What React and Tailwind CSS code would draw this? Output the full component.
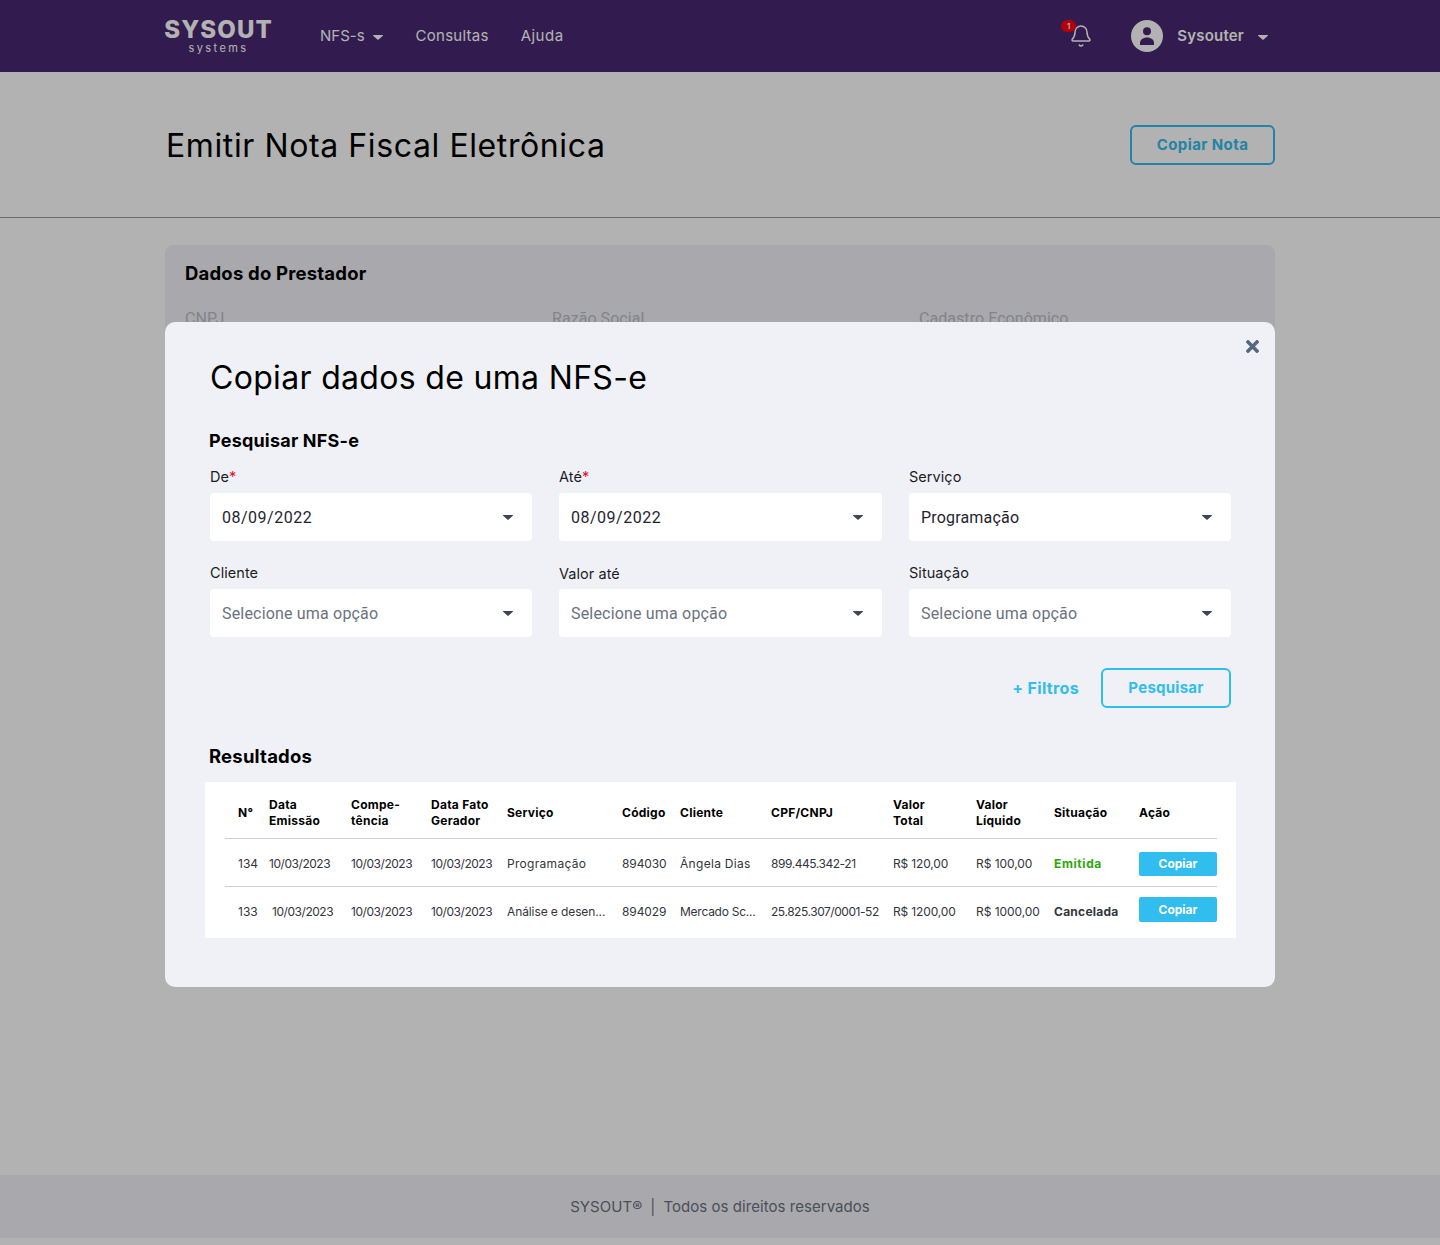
import { Bell } from "lucide-react"
import { FaTimes } from "react-icons/fa"

const Caret = ({ className = "" }) => (
  <svg width="10" height="5" viewBox="0 0 10 5" className={className}>
    <path d="M0.5 0h9a.5.5 0 0 1 .35.85L5.35 4.7a.5.5 0 0 1-.7 0L.15.85A.5.5 0 0 1 .5 0z" fill="currentColor" />
  </svg>
)

const Avatar = () => (
  <svg width="32" height="32" viewBox="0 0 32 32">
    <circle cx="16" cy="16" r="16" fill="#fff" />
    <circle cx="16" cy="11.2" r="4" fill="#482871" />
    <path d="M9 25v-2c0-3.4 3-5.6 7-5.6s7 2.2 7 5.6v2z" fill="#482871" />
  </svg>
)

function Field({ label, required, value, placeholder, lower, dateValue }) {
  return (
    <div>
      <div className={`h-[24px] flex items-center text-[14.5px] font-normal tracking-[0.05px] text-[#1c1c24] ${lower ? "pt-[2px]" : ""}`}>
        {label}
        {required && <span className="text-[#e0112b]">*</span>}
      </div>
      <div className="h-[48px] mt-[4px] px-3 flex items-center justify-between bg-white rounded-[4px]">
        <span className={`mt-[1px] [font-family:Roboto,sans-serif] text-[16px] ${dateValue ? "tracking-[0.5px]" : "tracking-[0.18px]"} ${placeholder ? "text-[#6b7280]" : "text-[#1f2430]"}`}>{value}</span>
        <Caret className="mr-[7px] text-[#3f4558]" />
      </div>
    </div>
  )
}

const heads = [
  ["N°"], ["Data", "Emissão"], ["Compe-", "tência"], ["Data Fato", "Gerador"], ["Serviço"], ["Código"],
  ["Cliente"], ["CPF/CNPJ"], ["Valor", "Total"], ["Valor", "Líquido"], ["Situação"], ["Ação"],
]

const rows = [
  { n: "134", indent: false, serv: "Programação", servCls: "tracking-[0.3px]", cod: "894030", cli: "Ângela Dias", cliCls: "tracking-[0.3px]", doc: "899.445.342-21", total: "R$ 120,00", liq: "R$ 100,00", sit: "Emitida", sitCls: "text-[#2aa70a] tracking-[0.6px]", btn: "h-[24px]", cellCls: "pt-[4px]" },
  { n: "133", indent: true, serv: "Análise e desen...", servCls: "tracking-[-0.1px]", cod: "894029", cli: "Mercado Sc...", cliCls: "tracking-[-0.25px]", doc: "25.825.307/0001-52", total: "R$ 1200,00", liq: "R$ 1000,00", sit: "Cancelada", sitCls: "text-[#33353d] tracking-[0.25px]", btn: "h-[25px] -mt-[4px]", cellCls: "pt-[2px]" },
]

export default function App() {
  return (
    <div className="relative min-h-[1245px] flex flex-col bg-white text-black [font-family:Inter,sans-serif]">
      <header className="h-[72px] bg-[#482871] text-white">
        <div className="w-[1110px] mx-auto h-full flex items-center">
          <div className="w-[107px] flex flex-col items-center">
            <span className="text-[24px] leading-[22px] font-extrabold tracking-[1.1px]">SYSOUT</span>
            <span className="mt-[1px] text-[11px] leading-[12px] tracking-[2.4px]">systems</span>
          </div>
          <nav className="ml-[48px] flex items-center text-[15px]">
            <span>NFS-s</span>
            <Caret className="ml-[8px] mt-[2px]" />
            <span className="ml-[33px] tracking-[0.25px]">Consultas</span>
            <span className="ml-[32px] tracking-[0.5px]">Ajuda</span>
          </nav>
          <div className="ml-auto flex items-center">
            <div className="relative mr-[38px]">
              <Bell size={24} strokeWidth={1.5} />
              <span className="absolute -left-[8px] -top-[4px] w-[15px] h-[12px] rounded-full bg-[#ff0010] text-[8px] leading-[12px] text-center font-semibold">1</span>
            </div>
            <Avatar />
            <span className="ml-[14px] text-[15px] font-semibold tracking-[0.2px]">Sysouter</span>
            <Caret className="ml-[14px] mr-[7px] mt-[2px]" />
          </div>
        </div>
      </header>

      <div className="h-[146px] border-b border-[#9a9a9a]">
        <div className="w-[1110px] mx-auto h-full flex items-center justify-between">
          <h1 className="mt-[2px] ml-[1px] text-[32px] font-normal tracking-[0.6px]">Emitir Nota Fiscal Eletrônica</h1>
          <button className="w-[145px] h-[40px] pt-[2px] border-2 border-[#31bdee] rounded-md text-[15px] font-bold tracking-[0.4px] text-[#31bdee]">Copiar Nota</button>
        </div>
      </div>

      <main className="flex-1 pt-[27px]">
        <section className="w-[1110px] h-[720px] mx-auto bg-[#f2f1f7] rounded-lg pl-5 pt-[16px]">
          <h2 className="text-[18.5px] leading-[24px] font-bold tracking-[0.2px]">Dados do Prestador</h2>
          <div className="mt-[22px] grid grid-cols-[367px_367px_1fr] [font-family:Roboto,sans-serif] text-[16px] tracking-[0.05px] text-[#bcbec6]">
            <span>CNPJ</span>
            <span>Razão Social</span>
            <span>Cadastro Econômico</span>
          </div>
        </section>
      </main>

      <footer className="mt-auto mb-[7px] h-[63px] pt-[2px] flex items-center justify-center bg-[#f2f1f7] text-[15px] tracking-[0.05px] text-[#6b7280]">
        <span>SYSOUT®</span>
        <span className="mx-[8px]">|</span>
        <span>Todos os direitos reservados</span>
      </footer>

      <div className="absolute inset-0 bg-black/30 pt-[322px]">
        <div className="relative w-[1110px] h-[665px] mx-auto bg-[#f0f1f7] rounded-[10px] pt-[34px] pl-[45px] pr-[44px]">
          <FaTimes size={19} className="absolute right-[13px] top-[15px] text-[#56677f]" />
          <h2 className="text-[32px] leading-[44px] font-normal tracking-[0.32px]">Copiar dados de uma NFS-e</h2>
          <h3 className="mt-[29px] -ml-[1px] text-[18px] leading-[24px] font-bold tracking-[0.2px]">Pesquisar NFS-e</h3>
          <div className="mt-[12px] grid grid-cols-[322px_323px_322px] gap-x-[27px] gap-y-[20px]">
            <Field label="De" required dateValue value="08/09/2022" />
            <Field label="Até" required dateValue value="08/09/2022" />
            <Field label="Serviço" value="Programação" />
            <Field label="Cliente" placeholder value="Selecione uma opção" />
            <Field label="Valor até" lower placeholder value="Selecione uma opção" />
            <Field label="Situação" placeholder value="Selecione uma opção" />
          </div>
          <div className="mt-[31px] flex items-center justify-end">
            <span className="text-[16px] font-bold tracking-[0.35px] text-[#31bdee]">+ Filtros</span>
            <button className="ml-[22px] w-[130px] h-[40px] pt-[1px] border-2 border-[#31bdee] rounded-md text-[15px] font-bold tracking-[0.25px] text-[#31bdee]">Pesquisar</button>
          </div>
          <h3 className="mt-[36px] -ml-[1px] text-[18.5px] leading-[24px] font-bold tracking-[0.2px]">Resultados</h3>
          <div className="mt-[14px] -ml-[5px] w-[1031px] h-[156px] bg-white px-5 pt-[8px]">
            <table className="w-[992px] table-fixed border-collapse text-[12px] text-[#33353d]">
              <colgroup>
                <col className="w-[44px]" />
                <col className="w-[82px]" />
                <col className="w-[80px]" />
                <col className="w-[76px]" />
                <col className="w-[115px]" />
                <col className="w-[58px]" />
                <col className="w-[91px]" />
                <col className="w-[122px]" />
                <col className="w-[83px]" />
                <col className="w-[78px]" />
                <col className="w-[85px]" />
                <col className="w-[78px]" />
              </colgroup>
              <thead>
                <tr className="h-[48px] border-b border-[#cfcfd2]">
                  {heads.map((h, i) => (
                    <th key={h[0] + i} className={`pb-[2px] text-left align-middle text-[12px] leading-[16px] font-bold tracking-[0.25px] text-black whitespace-nowrap ${i === 0 ? "pl-[13px]" : ""}`}>
                      {h.map((line) => <div key={line}>{line}</div>)}
                    </th>
                  ))}
                </tr>
              </thead>
              <tbody>
                {rows.map((r, i) => (
                  <tr key={r.n} className={i === 0 ? "h-[48px] border-b border-[#cfcfd2]" : "h-[49px]"}>
                    <td className={`pl-[13px] ${r.cellCls}`}>{r.n}</td>
                    <td className={`tracking-[-0.45px] ${r.cellCls} ${r.indent ? "pl-[3px]" : ""}`}>10/03/2023</td>
                    <td className={`tracking-[-0.45px] ${r.cellCls}`}>10/03/2023</td>
                    <td className={`tracking-[-0.45px] ${r.cellCls}`}>10/03/2023</td>
                    <td className={`${r.servCls} ${r.cellCls}`}>{r.serv}</td>
                    <td className={`tracking-[-0.1px] ${r.cellCls}`}>{r.cod}</td>
                    <td className={`${r.cliCls} ${r.cellCls}`}>{r.cli}</td>
                    <td className={`whitespace-nowrap tracking-[-0.45px] ${r.cellCls}`}>{r.doc}</td>
                    <td className={`tracking-[-0.15px] ${r.cellCls}`}>{r.total}</td>
                    <td className={`tracking-[-0.05px] ${r.cellCls}`}>{r.liq}</td>
                    <td className={`font-bold ${r.sitCls} ${r.cellCls}`}>{r.sit}</td>
                    <td className={r.cellCls}>
                      <button className={`block w-full rounded-[2px] bg-[#31bdee] text-white text-[12px] font-bold ${r.btn}`}>Copiar</button>
                    </td>
                  </tr>
                ))}
              </tbody>
            </table>
          </div>
        </div>
      </div>
    </div>
  )
}
